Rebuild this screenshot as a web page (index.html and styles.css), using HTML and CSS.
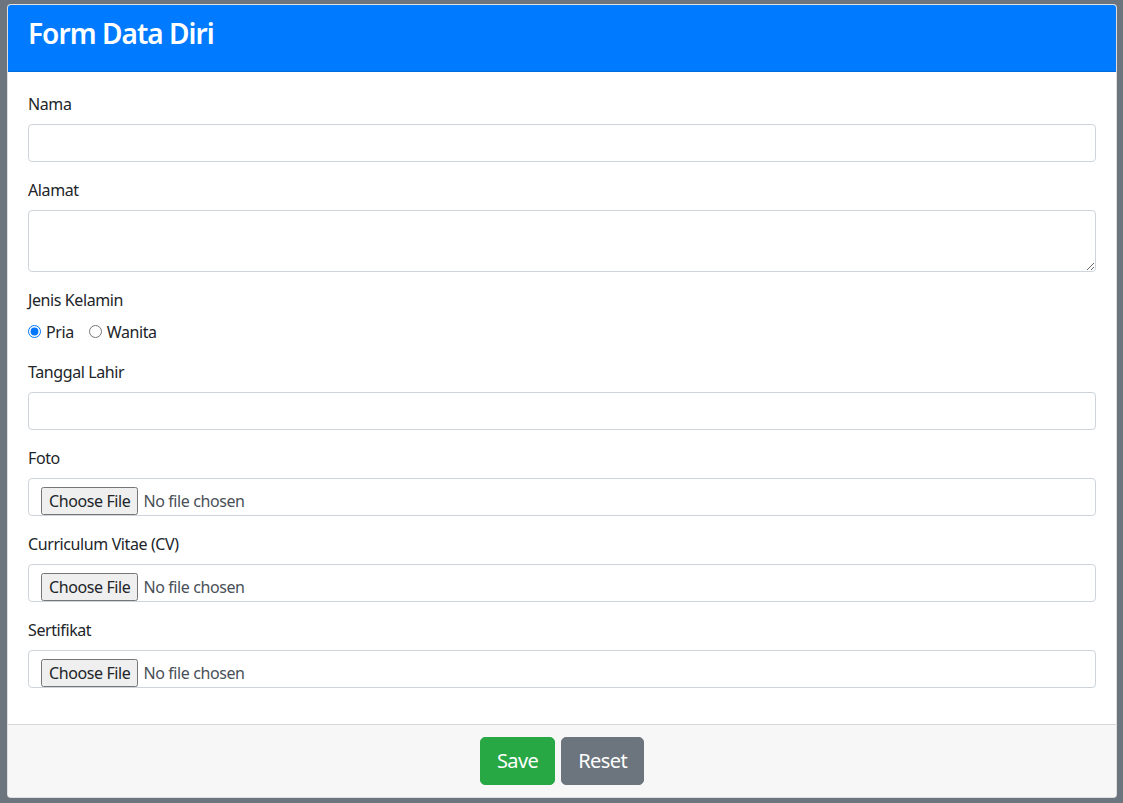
FILE: index.html
```html
<!DOCTYPE html>
<html lang="id">
<head>
<meta charset="utf-8">
<title>Form Data Diri</title>
<link rel="stylesheet" href="styles.css">
</head>
<body>
<div class="page">
  <form class="card">
    <div class="card-header">
      <h3 class="card-title">Form Data Diri</h3>
    </div>
    <div class="card-body">
      <div class="form-group">
        <label class="label" for="nama">Nama</label>
        <input class="form-control" type="text" id="nama">
      </div>
      <div class="form-group">
        <label class="label" for="alamat">Alamat</label>
        <textarea class="form-control textarea" id="alamat" rows="2"></textarea>
      </div>
      <div class="form-group">
        <label class="label">Jenis Kelamin</label>
        <div class="radio-row">
          <label class="form-check"><input type="radio" name="jk" class="radio" checked><span>Pria</span></label>
          <label class="form-check"><input type="radio" name="jk" class="radio"><span>Wanita</span></label>
        </div>
      </div>
      <div class="form-group">
        <label class="label" for="tgl">Tanggal Lahir</label>
        <input class="form-control" type="text" id="tgl">
      </div>
      <div class="form-group">
        <label class="label" for="foto">Foto</label>
        <input class="form-control file" type="file" id="foto">
      </div>
      <div class="form-group">
        <label class="label" for="cv">Curriculum Vitae (CV)</label>
        <input class="form-control file" type="file" id="cv">
      </div>
      <div class="form-group">
        <label class="label" for="sert">Sertifikat</label>
        <input class="form-control file" type="file" id="sert">
      </div>
    </div>
    <div class="card-footer">
      <button type="button" class="btn btn-save">Save</button>
      <button type="reset" class="btn btn-reset">Reset</button>
    </div>
  </form>
</div>
</body>
</html>
```

FILE: styles.css
```css
* { box-sizing: border-box; }
html, body { margin: 0; padding: 0; }
body {
  background: #6c757d;
  font-family: "Noto Sans", "Open Sans", Arial, sans-serif;
  font-size: 16px;
  line-height: 1.5;
  letter-spacing: -0.4px;
  color: #212529;
}
.page {
  padding: 4px 6px 6px 7px;
}
.card {
  display: flex;
  flex-direction: column;
  background: #fff;
  border: 1px solid rgba(0,0,0,.125);
  border-radius: 4px;
  overflow: hidden;
}
.card-header {
  background: #007bff;
  color: #fff;
  padding: 12px 20px;
  border-bottom: 1px solid rgba(0,0,0,.125);
}
.card-title {
  margin: 0 0 8px;
  font-size: 28px;
  font-weight: 600;
  line-height: 1.2;
  letter-spacing: -0.95px;
}
.card-body {
  padding: 20px;
}
.form-group {
  margin-bottom: 16px;
}
.label {
  display: inline-block;
  margin-bottom: 8px;
}
.form-control {
  display: block;
  width: 100%;
  height: 38px;
  padding: 6px 12px;
  font-family: inherit;
  font-size: 16px;
  line-height: 1.5;
  letter-spacing: -0.4px;
  color: #495057;
  background: #fff;
  border: 1px solid #ced4da;
  border-radius: 4px;
}
.textarea {
  height: 62px;
  resize: vertical;
}
.file {
  padding: 8px 12px 2px;
}
.file::file-selector-button {
  font-family: inherit;
  font-size: 16px;
  letter-spacing: -0.4px;
  color: #212529;
  margin-right: 5px;
}
.radio-row {
  display: flex;
  height: 24px;
  align-items: center;
}
.form-check {
  display: inline-flex;
  align-items: center;
  margin-right: 15px;
}
.radio {
  width: 13px;
  height: 13px;
  margin: 0 5px 0 0;
}
.card-footer {
  display: flex;
  justify-content: center;
  gap: 6px;
  padding: 12px 20px;
  background: #f7f7f7;
  border-top: 1px solid rgba(0,0,0,.125);
}
.btn {
  font-family: inherit;
  font-size: 20px;
  line-height: 1.5;
  letter-spacing: -0.6px;
  padding: 8px 16px;
  border: 1px solid transparent;
  border-radius: 5px;
  color: #fff;
}
.btn-save { background: #28a745; border-color: #28a745; }
.btn-reset { background: #6c757d; border-color: #6c757d; }
```
